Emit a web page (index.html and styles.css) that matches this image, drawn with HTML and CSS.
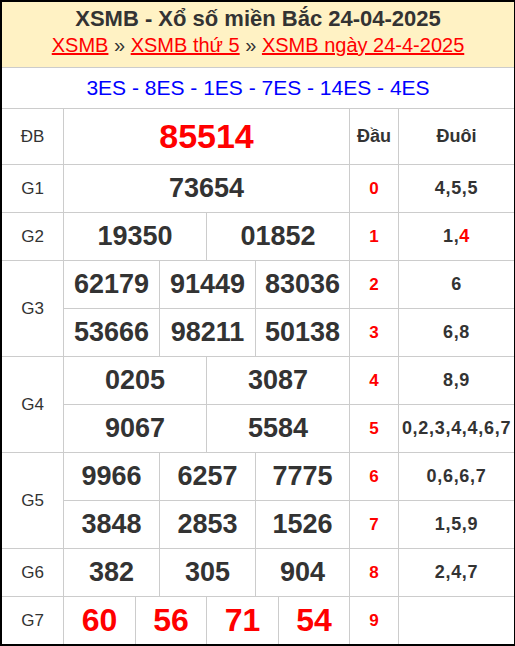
FILE: index.html
```html
<!DOCTYPE html>
<html lang="vi">
<head>
<meta charset="utf-8">
<title>XSMB 24-04-2025</title>
<link rel="stylesheet" href="styles.css">
</head>
<body>
<div class="wrap">
  <div class="head">
    <h1 class="title">XSMB - Xổ số miền Bắc 24-04-2025</h1>
    <div class="crumbs"><a href="#">XSMB</a> » <a href="#">XSMB thứ 5</a> » <a href="#">XSMB ngày 24-4-2025</a></div>
  </div>
  <div class="codes">3ES - 8ES - 1ES - 7ES - 14ES - 4ES</div>
  <div class="board">
    <div class="lbl">ĐB</div>
    <div class="val"><span class="num special">85514</span></div>
    <div class="dau hd">Đầu</div>
    <div class="duoi hd">Đuôi</div>

    <div class="lbl">G1</div>
    <div class="val"><span class="num">73654</span></div>
    <div class="dau">0</div>
    <div class="duoi">4,5,5</div>

    <div class="lbl">G2</div>
    <div class="val c2"><span class="num">19350</span><span class="num">01852</span></div>
    <div class="dau">1</div>
    <div class="duoi">1,<span class="red">4</span></div>

    <div class="lbl tall">G3</div>
    <div class="val c3"><span class="num">62179</span><span class="num">91449</span><span class="num">83036</span></div>
    <div class="dau">2</div>
    <div class="duoi">6</div>
    <div class="val c3"><span class="num">53666</span><span class="num">98211</span><span class="num">50138</span></div>
    <div class="dau">3</div>
    <div class="duoi">6,8</div>

    <div class="lbl tall">G4</div>
    <div class="val c2"><span class="num">0205</span><span class="num">3087</span></div>
    <div class="dau">4</div>
    <div class="duoi">8,9</div>
    <div class="val c2"><span class="num">9067</span><span class="num">5584</span></div>
    <div class="dau">5</div>
    <div class="duoi">0,2,3,4,4,6,7</div>

    <div class="lbl tall">G5</div>
    <div class="val c3"><span class="num">9966</span><span class="num">6257</span><span class="num">7775</span></div>
    <div class="dau">6</div>
    <div class="duoi">0,6,6,7</div>
    <div class="val c3"><span class="num">3848</span><span class="num">2853</span><span class="num">1526</span></div>
    <div class="dau">7</div>
    <div class="duoi">1,5,9</div>

    <div class="lbl">G6</div>
    <div class="val c3"><span class="num">382</span><span class="num">305</span><span class="num">904</span></div>
    <div class="dau">8</div>
    <div class="duoi">2,4,7</div>

    <div class="lbl">G7</div>
    <div class="val c4"><span class="num g7">60</span><span class="num g7">56</span><span class="num g7">71</span><span class="num g7">54</span></div>
    <div class="dau">9</div>
    <div class="duoi"></div>
  </div>
</div>
</body>
</html>
```
FILE: styles.css
```css
html, body {
  margin: 0;
  padding: 0;
  background: #fff;
}
body {
  font-family: "Liberation Sans", Arial, sans-serif;
  color: #333;
}
.wrap {
  width: 515px;
  box-sizing: border-box;
  border-top: 2px solid #000;
  border-left: 2px solid #000;
  border-right: 1px solid #000;
  border-bottom: 2px solid #000;
}
.head {
  height: 66px;
  box-sizing: border-box;
  padding-top: 4px;
  background: #fff2c4;
  border-bottom: 1px solid #ccc;
  text-align: center;
}
.title {
  margin: 0;
  font-size: 22px;
  line-height: 26px;
  font-weight: bold;
  color: #333;
}
.crumbs {
  font-size: 20px;
  line-height: 26px;
  color: #333;
}
.crumbs a {
  color: #f00;
  text-decoration: underline;
}
.codes {
  height: 41px;
  box-sizing: border-box;
  border-bottom: 1px solid #ccc;
  text-align: center;
  font-size: 21px;
  line-height: 40px;
  color: #00f;
}
.board {
  display: grid;
  grid-template-columns: 61px 285px 48px 115px;
  grid-template-rows: 55px repeat(10, 47px);
  gap: 1px;
  background: #ccc;
}
.board > div {
  background: #fff;
  display: flex;
  align-items: center;
  justify-content: center;
  overflow: hidden;
  white-space: nowrap;
}
.lbl {
  grid-column: 1;
  font-size: 17px;
}
.lbl.tall {
  grid-row: span 2;
}
.val {
  grid-column: 2;
}
.dau {
  grid-column: 3;
  color: #f00;
  font-weight: bold;
  font-size: 17px;
}
.duoi {
  grid-column: 4;
  font-weight: bold;
  font-size: 18px;
  letter-spacing: 0.7px;
}
.hd {
  color: #333;
  font-size: 18px;
  letter-spacing: 0;
}
.board > .c2,
.board > .c3,
.board > .c4 {
  display: grid;
  gap: 1px;
  background: #ccc;
  align-items: stretch;
  justify-content: stretch;
}
.c2 { grid-template-columns: 142px 142px; }
.c3 { grid-template-columns: 95px 95px 93px; }
.c4 { grid-template-columns: 71px 70px 71px 70px; }
.c2 > .num,
.c3 > .num,
.c4 > .num {
  background: #fff;
  display: flex;
  align-items: center;
  justify-content: center;
}
.num {
  font-weight: bold;
  font-size: 27px;
  color: #333;
}
.num.special {
  font-size: 34px;
  color: #f00;
}
.num.g7 {
  font-size: 32px;
  color: #f00;
}
.red {
  color: #f00;
}
```
